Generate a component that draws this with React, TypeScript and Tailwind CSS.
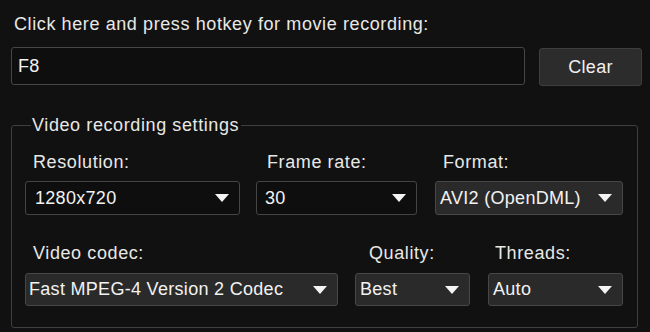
import React from "react";

interface DropdownProps {
  value: string;
  width: string;
  filled?: boolean;
  textPad: string;
}

const Caret = () => (
  <svg width="14" height="8" viewBox="0 0 14 8" className="shrink-0">
    <path d="M0 0 H14 L7 8 Z" fill="#f4f4f4" />
  </svg>
);

const Dropdown = ({ value, width, filled, textPad }: DropdownProps) => {
  return (
    <div
      className={[
        "flex items-center justify-between rounded-[3px] border pr-[10px] text-[#f2f2f2] tracking-[0.3px]",
        width,
        textPad,
        filled ? "bg-[#2a2a2a] border-[#474747]" : "bg-[#0e0e0e] border-[#444444]",
      ].join(" ")}
    >
      <span className="whitespace-nowrap">{value}</span>
      <Caret />
    </div>
  );
};

const Field = ({
  label,
  labelPad,
  height,
  children,
}: {
  label: string;
  labelPad: string;
  height: string;
  children: React.ReactNode;
}) => (
  <div className="flex flex-col">
    <div className={"leading-[20px] whitespace-nowrap " + labelPad}>{label}</div>
    <div className={"flex " + height}>{children}</div>
  </div>
);

export default function App() {
  return (
    <div
      className="w-[650px] h-[332px] bg-[#111111] pt-[14px] px-[11px] text-[18px] tracking-[0.6px] text-[#e8e8e6] overflow-hidden"
      style={{ fontFamily: '"Liberation Sans", Arial, sans-serif' }}
    >
      <div className="pl-[3px] leading-[20px] whitespace-nowrap">Click here and press hotkey for movie recording:</div>

      <div className="flex items-start mt-[13px]">
        <div className="flex shrink-0 items-center w-[514px] h-[38px] rounded-[3px] border border-[#464646] bg-[#0e0e0e] pl-[6px] text-[#f2f2f2] tracking-[0.3px]">
          F8
        </div>
        <button className="shrink-0 ml-[14px] mt-[1px] w-[103px] h-[38px] rounded-[3px] border border-[#3e3e3e] bg-[#2c2c2c] text-[#f0f0f0] tracking-[0.3px]">
          Clear
        </button>
      </div>

      <fieldset className="mt-[29px] w-[627px] rounded-[3px] border border-[#3f3f3f] px-[13px] pb-[21px]">
        <legend className="ml-[6px] pl-[1px] pr-[2px] leading-[20px]">Video recording settings</legend>

        <div className="flex mt-[17px] gap-x-[16px]">
          <Field label="Resolution:" labelPad="pl-[8px]" height="mt-[9px] h-[34px]">
            <Dropdown value="1280x720" width="w-[215px]" textPad="pl-[9px]" />
          </Field>
          <Field label="Frame rate:" labelPad="pl-[11px]" height="mt-[9px] h-[34px]">
            <Dropdown value="30" width="w-[161px]" textPad="pl-[8px]" />
          </Field>
          <div className="ml-[2px]">
            <Field label="Format:" labelPad="pl-[8px]" height="mt-[9px] h-[34px]">
              <Dropdown value="AVI2 (OpenDML)" width="w-[188px]" textPad="pl-[4px]" filled />
            </Field>
          </div>
        </div>

        <div className="flex mt-[28px] gap-x-[17px]">
          <Field label="Video codec:" labelPad="pl-[8px]" height="mt-[10px] h-[33px]">
            <Dropdown value="Fast MPEG-4 Version 2 Codec" width="w-[313px]" textPad="pl-[3px]" filled />
          </Field>
          <Field label="Quality:" labelPad="pl-[14px]" height="mt-[10px] h-[33px]">
            <Dropdown value="Best" width="w-[115px]" textPad="pl-[4px]" filled />
          </Field>
          <div className="ml-[1px]">
            <Field label="Threads:" labelPad="pl-[7px]" height="mt-[10px] h-[33px]">
              <Dropdown value="Auto" width="w-[135px]" textPad="pl-[4px]" filled />
            </Field>
          </div>
        </div>
      </fieldset>
    </div>
  );
}
